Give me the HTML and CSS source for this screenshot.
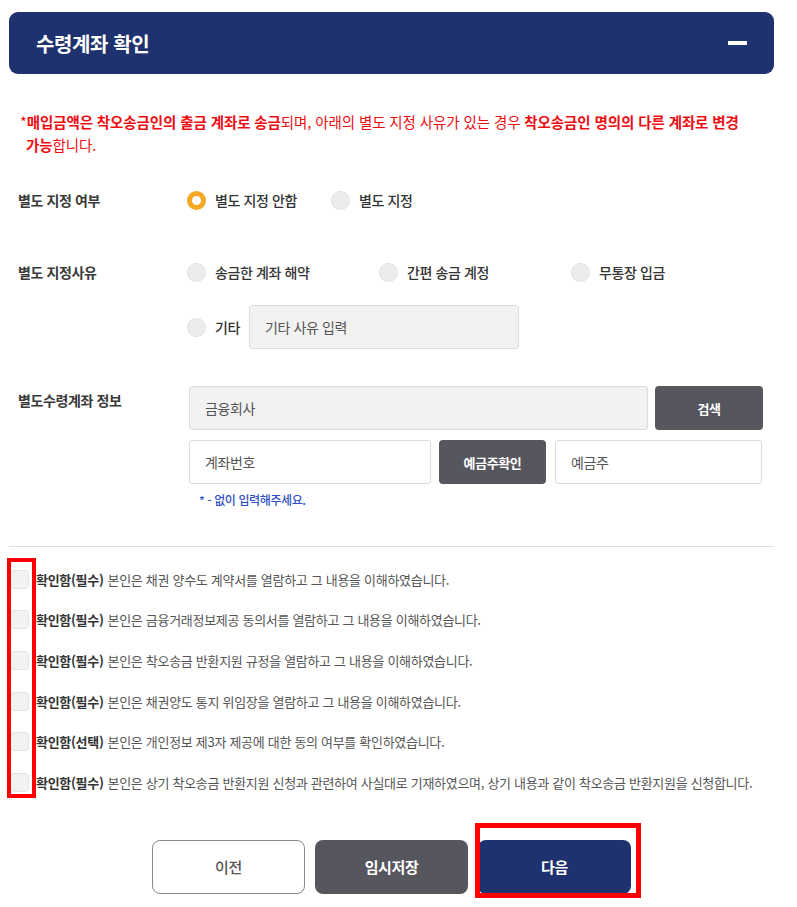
FILE: index.html
```html
<!DOCTYPE html>
<html lang="ko">
<head>
<meta charset="utf-8">
<title>수령계좌 확인</title>
<link rel="stylesheet" href="styles.css">
</head>
<body>
<div class="panel">
  <div class="panel-head">
    <h2 class="panel-title">수령계좌 확인</h2>
    <span class="minus"></span>
  </div>

  <p class="notice">*<b>매입금액은 착오송금인의 출금 계좌로 송금</b>되며, 아래의 별도 지정 사유가 있는 경우 <b>착오송금인 명의의 다른 계좌로 변경 가능</b>합니다.</p>

  <div class="row row-first">
    <div class="label">별도 지정 여부</div>
    <div class="content radios">
      <label class="radio"><span class="dot on"></span>별도 지정 안함</label>
      <label class="radio"><span class="dot"></span>별도 지정</label>
    </div>
  </div>

  <div class="row row-reason">
    <div class="label">별도 지정사유</div>
    <div class="content">
      <div class="reason-grid">
        <label class="radio"><span class="dot"></span>송금한 계좌 해약</label>
        <label class="radio"><span class="dot"></span>간편 송금 계정</label>
        <label class="radio"><span class="dot"></span>무통장 입금</label>
      </div>
      <div class="etc-line">
        <label class="radio"><span class="dot"></span>기타</label>
        <input class="field gray etc-input" type="text" placeholder="기타 사유 입력">
      </div>
    </div>
  </div>

  <div class="row row-account">
    <div class="label label-top">별도수령계좌 정보</div>
    <div class="content">
      <div class="acc-line">
        <input class="field gray bank" type="text" placeholder="금융회사">
        <button class="btn-dark search">검색</button>
      </div>
      <div class="acc-line second">
        <input class="field accno" type="text" placeholder="계좌번호">
        <button class="btn-dark owner-check">예금주확인</button>
        <input class="field owner" type="text" placeholder="예금주">
      </div>
      <p class="hint">* - 없이 입력해주세요.</p>
    </div>
  </div>

  <hr class="divider">

  <ul class="checks">
    <li><span class="box"></span><b>확인함(필수)</b> 본인은 채권 양수도 계약서를 열람하고 그 내용을 이해하였습니다.</li>
    <li><span class="box"></span><b>확인함(필수)</b> 본인은 금융거래정보제공 동의서를 열람하고 그 내용을 이해하였습니다.</li>
    <li><span class="box"></span><b>확인함(필수)</b> 본인은 착오송금 반환지원 규정을 열람하고 그 내용을 이해하였습니다.</li>
    <li><span class="box"></span><b>확인함(필수)</b> 본인은 채권양도 통지 위임장을 열람하고 그 내용을 이해하였습니다.</li>
    <li><span class="box"></span><b>확인함(선택)</b> 본인은 개인정보 제3자 제공에 대한 동의 여부를 확인하였습니다.</li>
    <li><span class="box"></span><b>확인함(필수)</b> 본인은 상기 착오송금 반환지원 신청과 관련하여 사실대로 기재하였으며, 상기 내용과 같이 착오송금 반환지원을 신청합니다.</li>
  </ul>

  <div class="actions">
    <button class="act prev">이전</button>
    <button class="act save">임시저장</button>
    <button class="act next">다음</button>
  </div>
</div>

<div class="mark mark-checks"></div>
<div class="mark mark-next"></div>
</body>
</html>
```

FILE: styles.css
```css
* { box-sizing: border-box; }

html, body {
  margin: 0;
  padding: 0;
  background: #fff;
}

body {
  position: relative;
  width: 797px;
  min-height: 907px;
  font-family: "Noto Sans CJK KR", "Noto Sans", sans-serif;
  color: #333;
  letter-spacing: -0.4px;
}

.panel {
  width: 765px;
  margin-left: 9px;
  padding-top: 12px;
}

.panel-head {
  height: 62px;
  background: #1d326e;
  border-radius: 9px;
  display: flex;
  align-items: center;
  justify-content: space-between;
  padding: 0 27px 0 27px;
}

.panel-title {
  margin: 0;
  color: #fff;
  font-size: 20px;
  font-weight: 700;
  letter-spacing: -0.4px;
}

.minus {
  width: 19px;
  height: 4px;
  background: #fff;
  display: block;
}

.notice {
  margin: 36px 30px 0 11px;
  padding-left: 6px;
  text-indent: -6px;
  font-size: 14.5px;
  line-height: 23px;
  color: #ee0d12;
  letter-spacing: -0.1px;
}

.notice b { font-weight: 700; }

.row {
  display: flex;
  padding-left: 9px;
}

.label {
  width: 169px;
  flex: none;
  font-size: 14px;
  font-weight: 700;
  color: #3a3a3a;
  display: flex;
  align-items: center;
  height: 44px;
}

.label-top {
  height: 28px;
}

.content { flex: 1; }

.row-first { margin-top: 22px; }
.row-reason { margin-top: 28px; }
.row-account { margin-top: 37px; }

.radios {
  display: flex;
  align-items: center;
  height: 44px;
}

.radios .radio { width: 144px; }

.radio {
  display: flex;
  align-items: center;
  height: 44px;
  font-size: 14px;
  color: #333;
  font-weight: 500;
  white-space: nowrap;
}

.dot {
  width: 19px;
  height: 19px;
  border-radius: 50%;
  background: #ececec;
  border: 1px solid #e2e2e2;
  margin-right: 9px;
  flex: none;
}

.dot.on {
  background: #fff;
  border: 5px solid #f7a823;
}

.reason-grid {
  display: grid;
  grid-template-columns: 192px 192px 192px;
}

.etc-line {
  display: flex;
  align-items: center;
  margin-top: 11px;
}

.etc-line .radio { margin-right: 9px; }

.field {
  height: 44px;
  border: 1px solid #dcdcdc;
  border-radius: 3px;
  background: #fff;
  font-family: "Noto Sans CJK KR", "Noto Sans", sans-serif;
  font-size: 14px;
  padding: 0 15px;
  color: #333;
  letter-spacing: -0.4px;
  outline: none;
}

.field::placeholder { color: #555; }

.field.gray { background: #f2f2f2; }

.etc-input { width: 270px; }

.acc-line {
  display: flex;
  align-items: center;
  margin-left: 2px;
}

.acc-line.second { margin-top: 10px; }

.bank { width: 459px; }

.btn-dark {
  height: 44px;
  background: #56565e;
  color: #fff;
  border: 0;
  border-radius: 4px;
  font-family: "Noto Sans CJK KR", "Noto Sans", sans-serif;
  font-size: 13px;
  font-weight: 700;
  letter-spacing: -0.4px;
}

.search { width: 108px; margin-left: 7px; }

.accno { width: 242px; }
.owner-check { width: 107px; margin-left: 8px; }
.owner { width: 207px; margin-left: 9px; }

.hint {
  margin: 8px 0 0 12px;
  font-size: 12px;
  line-height: 16px;
  color: #2f4fc4;
  font-weight: 500;
}

.divider {
  border: 0;
  border-top: 1px solid #dedede;
  margin: 38px 0 0 0;
}

.checks {
  list-style: none;
  margin: 12px 0 0 0;
  padding: 0;
}

.checks li {
  height: 40.6px;
  display: flex;
  align-items: center;
  font-size: 13px;
  color: #555;
  white-space: nowrap;
  letter-spacing: -0.3px;
}

.checks b {
  color: #333;
  font-weight: 700;
  margin-right: 4px;
}

.box {
  width: 19px;
  height: 19px;
  margin-left: 1px;
  margin-right: 7px;
  border: 1px solid #e4e4e4;
  border-radius: 4px;
  background: #f2f2f2;
  flex: none;
}

.actions {
  display: flex;
  justify-content: center;
  gap: 10px;
  margin-top: 37px;
}

.act {
  width: 153px;
  height: 54px;
  border-radius: 8px;
  font-family: "Noto Sans CJK KR", "Noto Sans", sans-serif;
  font-size: 15px;
  font-weight: 700;
  letter-spacing: -0.4px;
  border: 0;
}

.prev {
  background: #fff;
  border: 1px solid #8a8a8a;
  color: #555;
  font-weight: 500;
}

.save { background: #56565e; color: #fff; }
.next { background: #1d326e; color: #fff; }

.mark {
  position: absolute;
  border: 4px solid #ff0000;
  pointer-events: none;
}

.mark-checks {
  left: 7px;
  top: 558px;
  width: 29px;
  height: 240px;
}

.mark-next {
  left: 475px;
  top: 823px;
  width: 166px;
  height: 75px;
  border-width: 5px;
}
```
